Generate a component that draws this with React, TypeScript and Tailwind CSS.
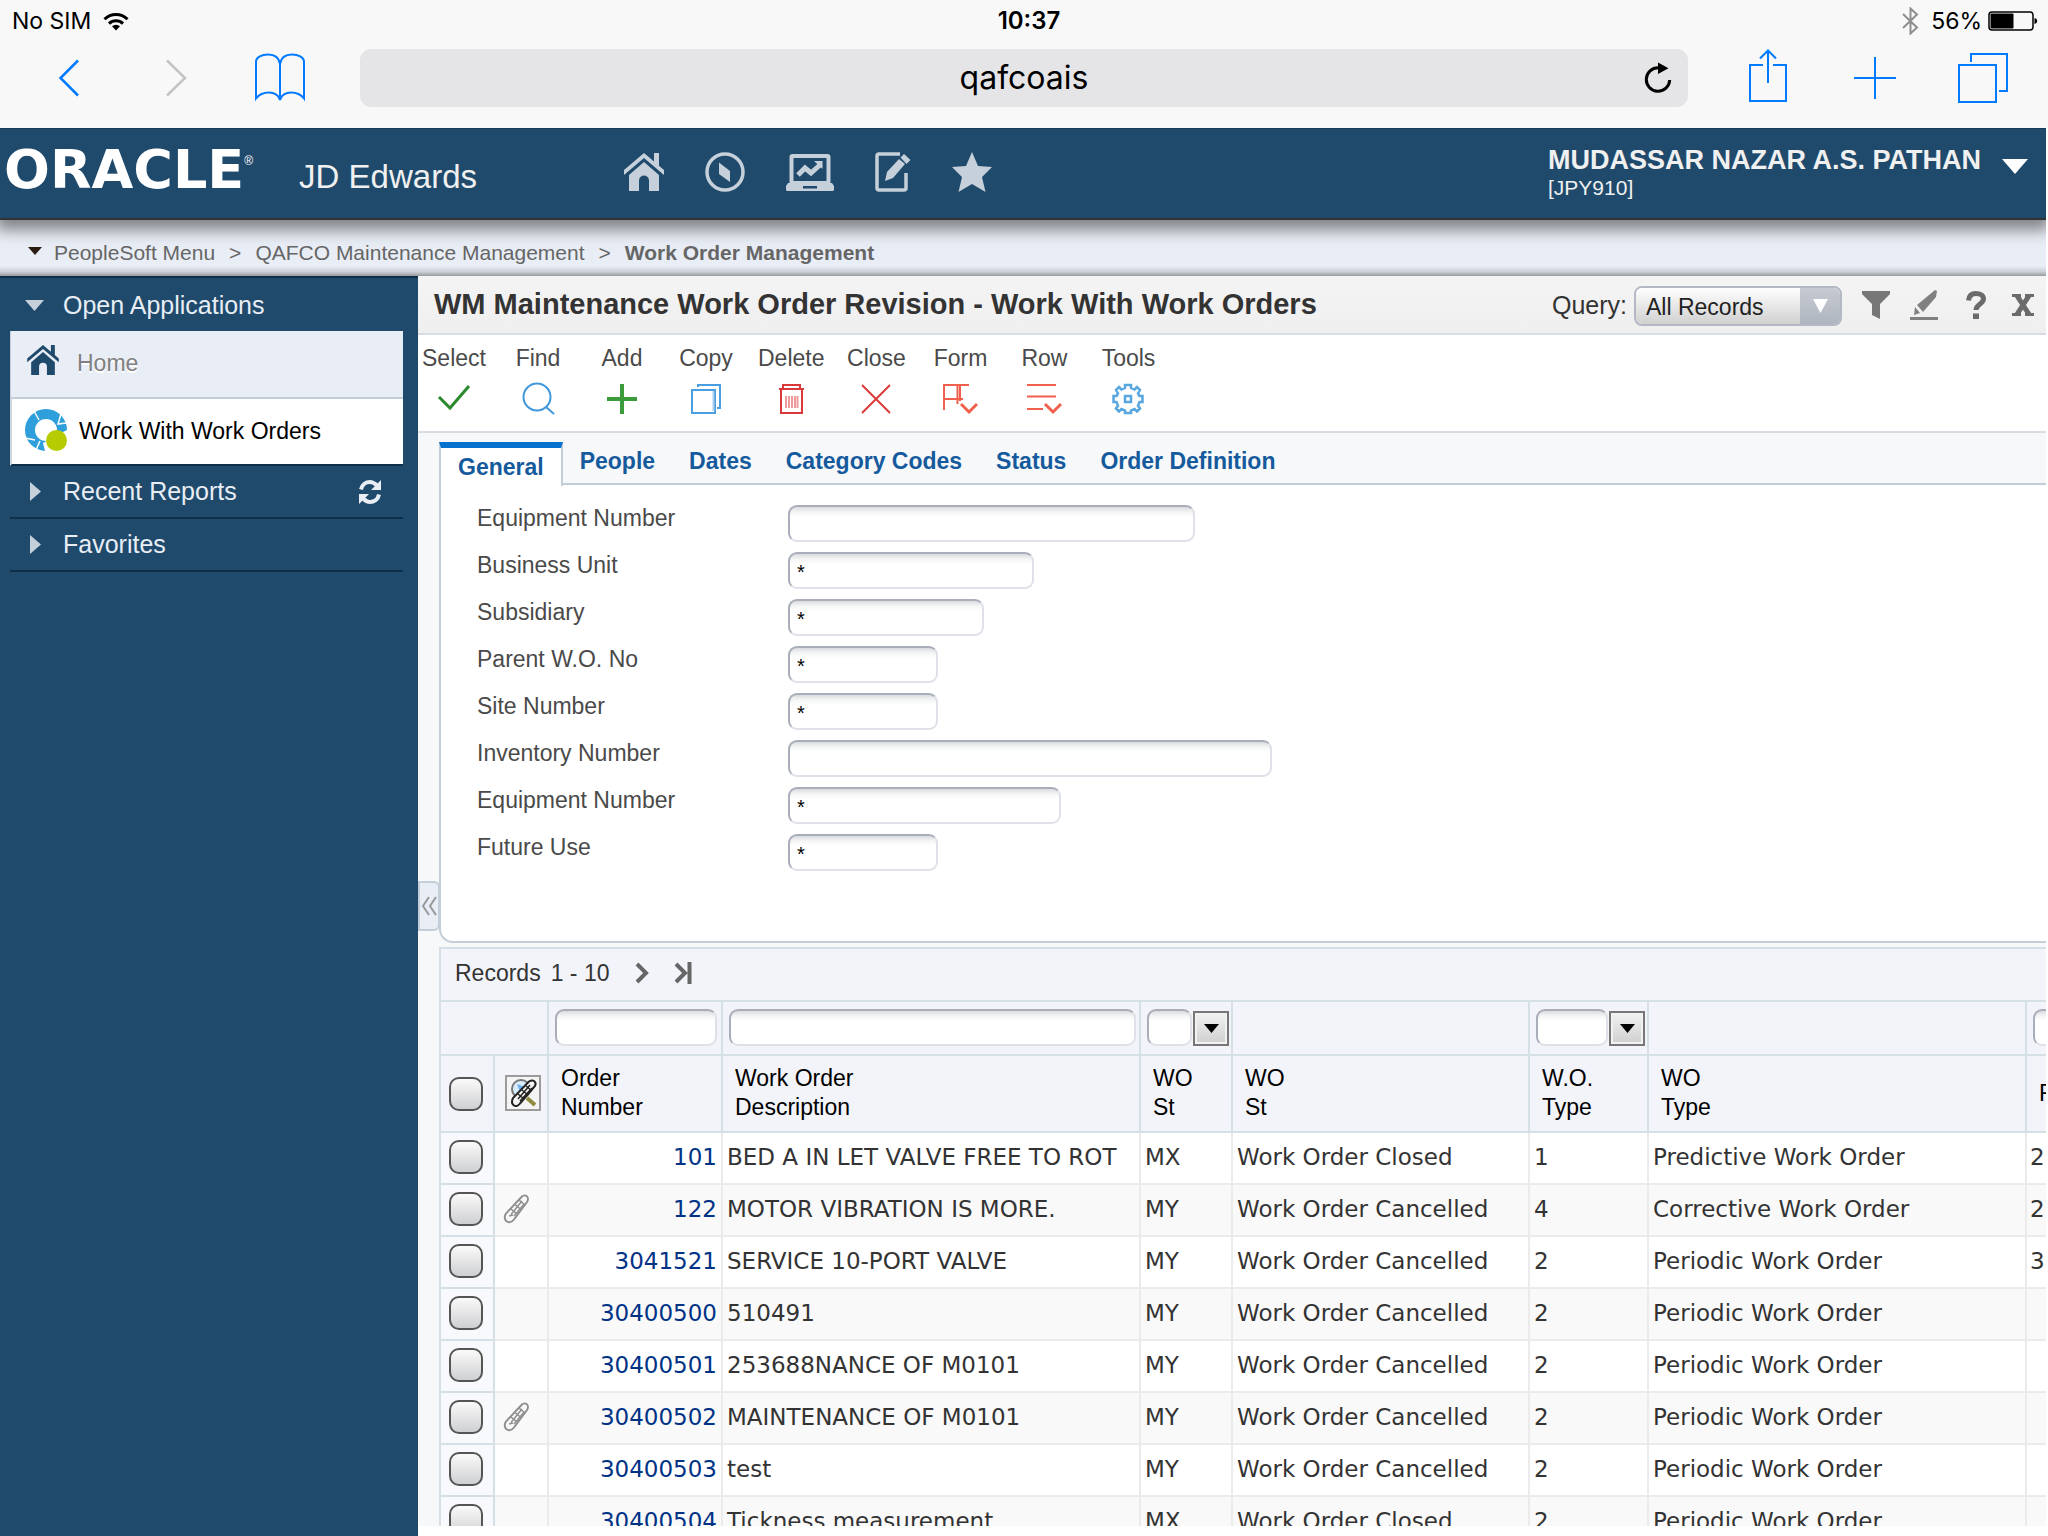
import React from "react";

type IconProps = { className?: string };

const fieldBox =
  "h-[37px] rounded-[9px] border-2 border-t-[#a9aeba] border-l-[#a9aeba] border-r-[#dfe1e8] border-b-[#dfe1e8] bg-white bg-[linear-gradient(to_bottom,#d9dcdf_0px,#f4f5f5_5px,#ffffff_10px)] text-black outline-none";

/* ---------- browser icons ---------- */

const Wifi = () => (
  <svg width="26" height="19" viewBox="0 0 26 19" fill="none" stroke="#000" strokeWidth="3">
    <path d="M1.5 7.2a16.3 16.3 0 0 1 23 0" />
    <path d="M6 11.6a10 10 0 0 1 14 0" />
    <path d="M13 18.5l-4-4.2a6 6 0 0 1 8 0z" fill="#000" stroke="none" />
  </svg>
);
const Bluetooth = () => (
  <svg width="17" height="28" viewBox="0 0 17 28" fill="none" stroke="#8e8e8e" strokeWidth="2">
    <path d="M1 7l14 13.500-6.500 6V1.500L15 7.500 1 21" />
  </svg>
);
const Battery = () => (
  <svg width="50" height="20" viewBox="0 0 50 20">
    <rect x="1" y="1" width="44" height="18" rx="3" fill="none" stroke="#000" strokeWidth="1.500" />
    <rect x="2.500" y="2.500" width="23" height="15" rx="1" fill="#000" />
    <path d="M46.500 7c3.500 .5 3.500 5.500 0 6z" fill="#000" />
  </svg>
);
const Chevron = ({ flip }: { flip?: boolean }) => (
  <svg width="22" height="38" viewBox="0 0 22 38" fill="none" stroke={flip ? "#c4c4c4" : "#007aff"} strokeWidth="2.500">
    {flip ? <path d="M2 1.500L20 19 2 36.500" /> : <path d="M20 1.500L2.500 19 20 36.500" />}
  </svg>
);
const Book = () => (
  <svg width="52" height="50" viewBox="0 0 52 50" fill="none" stroke="#007aff" strokeWidth="2">
    <path d="M26 11C25 4 20 1.500 14 1.500S2 4 2 8.500v37c3-4 8-6 13-6s10 2.500 11 7.500c1-5 6-7.500 11-7.500s10 2 13 6v-37c0-4.500-6-7-12-7S27 4 26 11zV47" />
  </svg>
);
const Reload = () => (
  <svg width="28" height="32" viewBox="0 0 28 32">
    <path d="M14.500 5.800A11.700 11.700 0 1 0 25.700 18" fill="none" stroke="#000" strokeWidth="3" />
    <path d="M14 .5l10.500 5.800L14 12z" fill="#000" />
  </svg>
);
const Share = () => (
  <svg width="40" height="54" viewBox="0 0 40 54" fill="none" stroke="#007aff" strokeWidth="2">
    <path d="M15 16H2v36h36V16H25M20 34V2M12 9.500L20 1.500l8 8" />
  </svg>
);
const Plus = () => (
  <svg width="42" height="42" viewBox="0 0 42 42" stroke="#007aff" strokeWidth="2">
    <path d="M0 21h42M21 0v42" />
  </svg>
);
const Pages = () => (
  <svg width="50" height="50" viewBox="0 0 50 50" fill="none" stroke="#007aff" strokeWidth="2">
    <path d="M1 12h37v37H1zM13 9V1h36v37h-8" />
  </svg>
);

/* ---------- application header icons ---------- */

const House = ({ className }: IconProps) => (
  <svg className={className} viewBox="0 0 40 38" fill="currentColor">
    <path d="M20 0L0 17v5L20 5l20 17v-5l-5-4.300V0h-5v8.500z" />
    <path d="M20 9L5 22v16h10V27.500a5 5 0 0 1 10 0V38h10V22z" />
  </svg>
);
const Compass = () => (
  <svg width="40" height="40" viewBox="0 0 40 40">
    <circle cx="20" cy="20" r="18" fill="none" stroke="currentColor" strokeWidth="3.500" />
    <path d="M14 10.500L25 19v11L14 22z" fill="currentColor" />
  </svg>
);
const Laptop = () => (
  <svg width="48" height="37" viewBox="0 0 48 37">
    <rect x="5.500" y="2" width="37" height="27" rx="1" fill="none" stroke="currentColor" strokeWidth="4" />
    <path d="M12 21l7-7 6 5 10-9" fill="none" stroke="currentColor" strokeWidth="5" />
    <path d="M28 7h8.500v8z" fill="currentColor" />
    <path fillRule="evenodd" d="M2 29h44l2 3v4q0 1-2 1H2q-2 0-2-1v-4zM17 32v2.500h14V32z" fill="currentColor" />
  </svg>
);
const Note = () => (
  <svg width="36" height="40" viewBox="0 0 36 40">
    <path d="M25 2H4Q2 2 2 4v32q0 2 2 2h25q2 0 2-2V21" fill="none" stroke="currentColor" strokeWidth="3.500" />
    <path d="M10 29l2-9L24 7l6 5-12 14zM25.500 5.500L29 2l6.500 6-4 4z" fill="currentColor" />
  </svg>
);
const Star = () => (
  <svg width="40" height="40" viewBox="0 0 40 40" fill="currentColor">
    <path d="M20 0l6 14 14 1-10 10 3.500 15L20 32 6.500 40 10 25 0 15l14-1z" />
  </svg>
);

/* ---------- sidebar icons ---------- */

const Refresh = () => (
  <svg width="22" height="24" viewBox="0 0 22 24">
    <g fill="none" stroke="#e9eef5" strokeWidth="4">
      <path d="M2 9.500C3 4.500 7 2 11 2c3.500 0 5 1.500 7.500 4" />
      <path d="M20 14.500C19 19.500 15 22 11 22c-3.500 0-5-1.500-7.500-4" />
    </g>
    <path d="M22 0v10H12zM0 24V14h10z" fill="#e9eef5" />
  </svg>
);
const AppLogo = () => (
  <svg width="42" height="42" viewBox="0 0 42 42">
    <circle cx="21" cy="21" r="16" fill="none" stroke="#2f9fdc" strokeWidth="10" />
    <path d="M9 2l5 9M36 5l-3 10 8-1M0 29l10 2M11 41l4-9" stroke="#fff" strokeWidth="1.500" fill="none" />
    <path d="M34 25l8-4v21H20l-2-8z" fill="#fff" />
    <circle cx="31.500" cy="31.500" r="10.500" fill="#b6cc00" />
  </svg>
);

/* ---------- toolbar icons ---------- */

const toolIcon = { width: 36, height: 34, viewBox: "0 0 36 34", fill: "none" } as const;

const tools: { label: string; icon: React.ReactNode }[] = [
  { label: "Select", icon: <svg {...toolIcon} stroke="#2b8a2b" strokeWidth="3"><path d="M3 15l11 11L33 4" /></svg> },
  { label: "Find", icon: <svg {...toolIcon} stroke="#3f97dc" strokeWidth="2"><circle cx="17" cy="15" r="13.500" /><path d="M26 25l8 7" /></svg> },
  { label: "Add", icon: <svg {...toolIcon} stroke="#3c9c3c" strokeWidth="4"><path d="M3 17h30M18 2v30" /></svg> },
  {
    label: "Copy",
    icon: (
      <svg {...toolIcon} stroke="#4b9edf" strokeWidth="2">
        <path d="M4 8h23v23H4z" />
        <path d="M10 5V3h22v23h-3" />
        <path d="M25.500 29V9" stroke="#a9d0f0" />
      </svg>
    ),
  },
  {
    label: "Delete",
    icon: (
      <svg {...toolIcon} stroke="#d9393b" strokeWidth="2">
        <path d="M6 7h25M10 6V3h17v3M8 7v24h21V7" />
        <path d="M13 14v12M16 14v12M19 14v12M22 14v12M24.500 14v12" stroke="#ee9a9b" strokeWidth="2" />
      </svg>
    ),
  },
  { label: "Close", icon: <svg {...toolIcon} stroke="#dc3a37" strokeWidth="2"><path d="M4 3l28 28M32 3L4 31" /></svg> },
  {
    label: "Form",
    icon: (
      <svg {...toolIcon} stroke="#f0604c" strokeWidth="2">
        <path d="M2 28V3h25M2 17h19M15.500 3v19M18 3v16" />
        <path d="M19 22l8 8 8-8" strokeWidth="3" />
      </svg>
    ),
  },
  {
    label: "Row",
    icon: (
      <svg {...toolIcon} stroke="#f0604c" strokeWidth="2">
        <path d="M1 3h29M1 14.500h29M1 27h16" />
        <path d="M19 22l8 8 8-8" strokeWidth="3" />
      </svg>
    ),
  },
  {
    label: "Tools",
    icon: (
      <svg {...toolIcon} stroke="#58a6df" strokeWidth="2.500">
        <path d="M15 6V3h6v3l3.500 1.500L27 5l3 3-2 3.500L29.500 14h3v6h-3L28 23.500l2 3-3 3-2.500-2.500L21 28.500V31h-6v-2.500L11.500 27 9 29.500l-3-3 2-3L6.500 20h-3v-6h3L8 11.500 6 8l3-3 2.500 2.500z" />
        <path d="M15 14h6v6h-6z" />
      </svg>
    ),
  },
];

/* ---------- grid icons ---------- */

const Clip = () => (
  <svg width="26" height="30" viewBox="0 0 26 30" fill="none" stroke="#8f8f8f" strokeWidth="2">
    <path d="M18 3.500L3 19.500c-2 3-1.500 6.500 1 8s5 .5 7-2L24 8c1.500-2.500 1-5-.5-6s-4-.5-5.500 1.500z" />
    <path d="M19 7L8 20.500M21.500 9.500L11 22M16 6l6 5M12 10.500l6 5M8 15l6 5M6 22l4-1" strokeWidth="1.500" />
  </svg>
);
const ClipSearch = () => (
  <svg width="36" height="36" viewBox="0 0 36 36" fill="none">
    <rect x="1" y="1" width="34" height="34" fill="#f4f4f4" stroke="#9b9b9b" strokeWidth="2" />
    <path d="M22 23l8 7" stroke="#8f8a3c" strokeWidth="4" />
    <circle cx="16" cy="14" r="9" fill="#d9ecfb" stroke="#777" strokeWidth="2" />
    <path d="M12 9l8 3-5 5z" fill="#6db1ee" />
    <g stroke="#222" strokeWidth="2">
      <path d="M24 6.500L8 23c-1.500 3-1 6 1 7.500s4.500 0 6-2L30 11c1-2 .5-4-1-5s-3.500-.5-5 .5z" fill="#f4f4f4" />
      <path d="M25 10L13 24M27 13L15 26M21 11l6 5M17 15l6 5M13 19l6 5" strokeWidth="1.500" />
    </g>
  </svg>
);

/* ---------- data ---------- */

const fields = [
  { label: "Equipment Number", value: "", width: "w-[407px]" },
  { label: "Business Unit", value: "*", width: "w-[246px]" },
  { label: "Subsidiary", value: "*", width: "w-[196px]" },
  { label: "Parent W.O. No", value: "*", width: "w-[150px]" },
  { label: "Site Number", value: "*", width: "w-[150px]" },
  { label: "Inventory Number", value: "", width: "w-[484px]" },
  { label: "Equipment Number", value: "*", width: "w-[273px]" },
  { label: "Future Use", value: "*", width: "w-[150px]" },
];

const rows = [
  { id: "101", clip: false, desc: "BED A IN LET VALVE FREE TO ROT", st: "MX", status: "Work Order Closed", type: "1", typeName: "Predictive Work Order", more: "2" },
  { id: "122", clip: true, desc: "MOTOR VIBRATION IS MORE.", st: "MY", status: "Work Order Cancelled", type: "4", typeName: "Corrective Work Order", more: "2" },
  { id: "3041521", clip: false, desc: "SERVICE 10-PORT VALVE", st: "MY", status: "Work Order Cancelled", type: "2", typeName: "Periodic Work Order", more: "3" },
  { id: "30400500", clip: false, desc: "510491", st: "MY", status: "Work Order Cancelled", type: "2", typeName: "Periodic Work Order", more: "" },
  { id: "30400501", clip: false, desc: "253688NANCE OF M0101", st: "MY", status: "Work Order Cancelled", type: "2", typeName: "Periodic Work Order", more: "" },
  { id: "30400502", clip: true, desc: "MAINTENANCE OF M0101", st: "MY", status: "Work Order Cancelled", type: "2", typeName: "Periodic Work Order", more: "" },
  { id: "30400503", clip: false, desc: "test", st: "MY", status: "Work Order Cancelled", type: "2", typeName: "Periodic Work Order", more: "" },
  { id: "30400504", clip: false, desc: "Tickness measurement", st: "MX", status: "Work Order Closed", type: "2", typeName: "Periodic Work Order", more: "" },
];

/* ---------- parts ---------- */

function BrowserBar() {
  return (
    <div className="flex h-32 shrink-0 flex-col bg-[#f8f8f8] font-[Inter,sans-serif] text-black">
      <div className="grid h-10 grid-cols-[1fr_auto_1fr] items-center pl-3 pr-2.5 pt-0.5 text-[23px]">
        <div className="flex items-center gap-3">
          <span>No SIM</span>
          <Wifi />
        </div>
        <div className="pl-2 text-center text-2xl font-semibold">10:37</div>
        <div className="flex items-center justify-end">
          <Bluetooth />
          <span className="ml-3 mr-1.5">56%</span>
          <Battery />
        </div>
      </div>
      <div className="grid h-[76px] grid-cols-[360px_1fr_360px] items-center">
        <div className="flex items-center pl-[58px]">
          <button aria-label="Back" className="mr-[85px]"><Chevron /></button>
          <button aria-label="Forward" className="mr-[67px]"><Chevron flip /></button>
          <button aria-label="Bookmarks"><Book /></button>
        </div>
        <div className="flex h-[58px] items-center rounded-[11px] bg-[#e5e5e7] pl-[60px] pr-4">
          <input aria-label="Address" defaultValue="qafcoais" className="min-w-0 flex-1 bg-transparent text-center text-[32px] outline-none" />
          <button aria-label="Reload" className="ml-4"><Reload /></button>
        </div>
        <div className="flex items-center pl-[60px]">
          <button aria-label="Share" className="mb-1 mr-[66px]"><Share /></button>
          <button aria-label="New tab" className="mr-[62px]"><Plus /></button>
          <button aria-label="Tabs"><Pages /></button>
        </div>
      </div>
    </div>
  );
}

function Header() {
  return (
    <header className="z-10 flex h-[92px] shrink-0 border-b-2 border-t border-b-[#333] border-t-[#173a56] bg-[#1f4a6c] shadow-[0_6px_14px_4px_rgba(60,60,60,0.6)]">
      <div className="flex w-[624px] items-baseline pl-1 pt-2.5 text-white">
        <span className="font-['DejaVu_Sans',sans-serif] text-[54px] font-bold leading-[62px]">ORACLE</span>
        <sup className="self-start pt-5 text-xs">®</sup>
        <span className="ml-auto mr-[147px] text-[33px] text-[#f0f0f0]">JD Edwards</span>
      </div>
      <nav className="flex h-[86px] items-center gap-[41px] text-[#c5d0da]">
        <button aria-label="Home"><House className="h-[38px] w-10" /></button>
        <button aria-label="Navigator"><Compass /></button>
        <button aria-label="Dashboard"><Laptop /></button>
        <button aria-label="Edit"><Note /></button>
        <button aria-label="Favorites"><Star /></button>
      </nav>
      <button className="ml-auto mr-[18px] flex items-start gap-[21px] pt-4 text-left text-[#f0f0f0]">
        <span>
          <span className="block text-[27px] font-bold leading-[31px]">MUDASSAR NAZAR A.S. PATHAN</span>
          <span className="block text-[21px] leading-6">[JPY910]</span>
        </span>
        <svg width="26" height="15" viewBox="0 0 26 15" className="mt-[14px]"><path d="M0 0h26L13 15z" fill="#fff" /></svg>
      </button>
    </header>
  );
}

function Breadcrumbs() {
  return (
    <nav className="flex h-14 shrink-0 items-center gap-[14px] bg-[linear-gradient(to_bottom,#e9eef6_46px,#c9cdd4_52px,#96999d_56px)] pl-7 pt-2.5 text-[21px] leading-6 text-[#666]">
      <span className="flex items-center gap-3">
        <svg width="14" height="8" viewBox="0 0 14 8" className="-mt-1"><path d="M0 0h14L7 8z" fill="#2b1d12" /></svg>
        <a href="#menu">PeopleSoft Menu</a>
      </span>
      <span>&gt;</span>
      <a href="#maintenance">QAFCO Maintenance Management</a>
      <span>&gt;</span>
      <a href="#orders" className="font-bold">Work Order Management</a>
    </nav>
  );
}

const RightTriangle = () => (
  <svg width="11" height="19" viewBox="0 0 11 19" className="ml-5 mr-[22px]"><path d="M0 0l11 9.500L0 19z" fill="#c5d0da" /></svg>
);

function Sidebar() {
  return (
    <aside className="w-[418px] shrink-0 border-t-2 border-[#0f2f49] bg-[#1f4a6c] pl-2.5 pr-[15px] text-[25px] text-[#e9eef5]">
      <button className="flex h-[53px] w-full items-center gap-[19px] pl-[15px] pt-0.5">
        <svg width="19" height="11" viewBox="0 0 19 11"><path d="M0 0h19L9.500 11z" fill="#c5d0da" /></svg>
        Open Applications
      </button>
      <div className="text-[23px]">
        <a href="#home" className="flex h-[68px] items-center gap-[18px] border-b-2 border-l border-b-[#c3ced9] border-l-[#c3ced9] bg-[#e9eef6] pb-0.5 pl-4 text-[#808080] [text-shadow:0_2px_0_#fff]">
          <House className="-mt-1.5 h-[30px] w-8 text-[#1f4a6c]" />
          Home
        </a>
        <a href="#work" className="flex h-[67px] items-center gap-3 border-l-2 border-b-2 border-b-[#0f2f49] border-l-[#d0d7de] bg-white pl-[13px] text-black">
          <span className="-mt-1"><AppLogo /></span>
          Work With Work Orders
        </a>
      </div>
      <div className="flex h-[53px] items-center border-b-2 border-[#0f2f49]">
        <button className="flex flex-1 items-center"><RightTriangle />Recent Reports</button>
        <button aria-label="Refresh" className="mr-[22px]"><Refresh /></button>
      </div>
      <button className="flex h-[53px] w-full items-center border-b-2 border-[#0f2f49]"><RightTriangle />Favorites</button>
    </aside>
  );
}

function TitleBar() {
  return (
    <div className="flex h-[59px] shrink-0 items-center border-b-2 border-[#d7dde2] bg-linear-to-b from-[#f4f4f4] to-[#efefef] pl-4 pr-3 text-[#333]">
      <h1 className="text-[29px] font-bold">WM Maintenance Work Order Revision - Work With Work Orders</h1>
      <label htmlFor="query" className="ml-auto pt-0.5 text-[25px]">Query:</label>
      <div className="relative ml-[7px] mt-0.5 h-10 w-52 overflow-hidden rounded-[8px] border-2 border-[#b3b8c4]">
        <select id="query" className="h-full w-full appearance-none bg-linear-to-b from-white to-[#d0d0d0] pl-2.5 pt-0.5 text-[23px] text-[#222] outline-none">
          <option>All Records</option>
        </select>
        <span className="pointer-events-none absolute inset-y-0 right-0 flex w-10 items-center justify-center bg-linear-to-b from-[#c6cad2] to-[#afb5c0]">
          <svg width="15" height="14" viewBox="0 0 15 14"><path d="M0 0h15L7.500 14z" fill="#fff" /></svg>
        </span>
      </div>
      <button aria-label="Filter" className="ml-5">
        <svg width="28" height="30" viewBox="0 0 28 30" fill="#777"><path d="M0 1h28v3L18 14v15l-8-4V14L0 4z" /></svg>
      </button>
      <button aria-label="Edit query" className="ml-5">
        <svg width="28" height="32" viewBox="0 0 28 32" fill="#808080"><path d="M0 28h28v3H0zM4 26l1-8 5 6zM7 16L25 1l2 1-1 6-13 15z" /></svg>
      </button>
      <button aria-label="Help" className="ml-7">
        <svg width="20" height="28" viewBox="0 0 20 28"><path d="M2.500 9.500C3 4.500 6 2.500 10 2.500s7.500 2 7.500 5.500c0 5-7.500 5-7.500 11" fill="none" stroke="#6b6b6b" strokeWidth="5" /><path d="M7 22.500h6V28H7z" fill="#6b6b6b" /></svg>
      </button>
      <button aria-label="Close form" className="ml-[26px]">
        <svg width="22" height="22" viewBox="0 0 22 22"><path d="M4.500 1l13 20M17.500 1l-13 20" stroke="#6b6b6b" strokeWidth="5" /><path d="M0 0h9v3H0zM13 0h9v3h-9zM0 19h9v3H0zM13 19h9v3h-9z" fill="#6b6b6b" /></svg>
      </button>
    </div>
  );
}

function Toolbar() {
  return (
    <div className="flex h-[98px] shrink-0 items-start gap-5 border-b-2 border-[#d7dde2] bg-white pl-1 pt-[9px] text-[23px] leading-7 text-[#4a4a4a]">
      {tools.map((t) => (
        <button key={t.label} className="flex min-w-16 flex-col items-center gap-2.5">
          <span>{t.label}</span>
          {t.icon}
        </button>
      ))}
    </div>
  );
}

function FormPanel() {
  return (
    <div className="relative shrink-0 pl-[21px]">
      <div role="tablist" className="flex h-[52px] items-end text-[23px] font-bold text-[#155a9c]">
        <button role="tab" aria-selected="true" className="z-10 -mb-px h-[44px] border-x-2 border-t-[6px] border-x-[#c3ced9] border-t-[#0572ce] bg-white px-[17px] leading-[34px]">
          General
        </button>
        <div className="flex h-full flex-1 items-center gap-[34px] border-b-2 border-[#c3ced9] pl-[17px] pt-[7px]">
          {["People", "Dates", "Category Codes", "Status", "Order Definition"].map((t) => (
            <button key={t} role="tab" aria-selected="false">{t}</button>
          ))}
        </div>
      </div>
      <div className="h-[458px] rounded-bl-[14px] border-b-2 border-l-2 border-[#c3ced9] bg-white pl-9 pt-5">
        {fields.map((f, i) => (
          <div key={i} className="flex h-[47px] items-start">
            <label htmlFor={`field-${i}`} className="w-[311px] text-[23px] leading-[26px] text-[#4a4a4a]">{f.label}</label>
            <input id={`field-${i}`} defaultValue={f.value} className={`${fieldBox} ${f.width} px-[7px] pt-1 text-xl`} />
          </div>
        ))}
      </div>
      <button aria-label="Collapse sidebar" className="absolute bottom-3 left-0 flex h-[50px] w-[22px] items-center justify-center rounded-r-[6px] border-2 border-[#c3ced9] bg-[#e9eef6]">
        <svg width="16" height="20" viewBox="0 0 16 20" fill="none" stroke="#999" strokeWidth="2"><path d="M8 1L2 10l6 9M15 1L9 10l6 9" /></svg>
      </button>
    </div>
  );
}

const Check = ({ label }: { label: string }) => (
  <input
    type="checkbox"
    aria-label={label}
    className="ml-2 block h-[34px] w-[34px] appearance-none rounded-[10px] border-2 border-[#555] bg-linear-to-b from-[#fafafa] to-[#cfd0d2]"
  />
);

const PickButton = ({ label }: { label: string }) => (
  <button aria-label={label} className="ml-px mt-0.5 flex h-[35px] w-9 shrink-0 items-center justify-center border-2 border-[#777] bg-linear-to-b from-[#f2f2f2] to-[#cfcfcf] shadow-[inset_0_0_0_2px_#f2f2f2]">
    <svg width="15" height="9" viewBox="0 0 15 9"><path d="M0 0h15L7.500 9z" fill="#000" /></svg>
  </button>
);

function Grid() {
  const filterCell = "border-b-2 border-r-2 border-[#d5dfe6] p-0 pb-0.5 pl-1.5";
  const headCell = "border-b-2 border-r-2 border-[#d5dfe6] p-0 pb-0.5 pl-3 font-normal";
  const cell = "overflow-hidden whitespace-nowrap border-b-2 border-r-2 border-[#ebebeb] p-0 pb-0.5 pl-1";
  return (
    <div className="ml-[21px] mt-1 min-h-0 flex-1 overflow-hidden border-l-2 border-t-2 border-[#d5dfe6] bg-[#f2f4f9]">
      <div className="flex h-[53px] items-center border-b-2 border-[#d5dfe6] pb-0.5 pl-[14px] text-[23px] text-[#333]">
        <span className="mr-2.5">Records</span>
        <span>1 - 10</span>
        <button aria-label="Next page" className="ml-[26px]">
          <svg width="14" height="24" viewBox="0 0 14 24" fill="none" stroke="#666" strokeWidth="4"><path d="M2 2l9 9-9 9" /></svg>
        </button>
        <button aria-label="Last page" className="ml-[25px]">
          <svg width="18" height="24" viewBox="0 0 18 24" fill="none" stroke="#666" strokeWidth="4"><path d="M2 2l9 9-9 9M15.500 0v22" /></svg>
        </button>
      </div>
      <table className="w-full table-fixed border-separate border-spacing-0">
        <colgroup>
          <col className="w-[54px]" />
          <col className="w-[54px]" />
          <col className="w-[174px]" />
          <col className="w-[418px]" />
          <col className="w-[92px]" />
          <col className="w-[297px]" />
          <col className="w-[119px]" />
          <col className="w-[378px]" />
          <col />
        </colgroup>
        <thead>
          <tr className="h-[54px]">
            <td colSpan={2} className={filterCell} />
            <td className={filterCell}><input aria-label="Filter order number" className={`${fieldBox} block w-[162px]`} /></td>
            <td className={filterCell}><input aria-label="Filter description" className={`${fieldBox} block w-[407px]`} /></td>
            <td className={filterCell}>
              <div className="flex"><input aria-label="Filter status" className={`${fieldBox} w-[45px]`} /><PickButton label="Pick status" /></div>
            </td>
            <td className={filterCell} />
            <td className={filterCell}>
              <div className="flex"><input aria-label="Filter type" className={`${fieldBox} w-[72px]`} /><PickButton label="Pick type" /></div>
            </td>
            <td className={filterCell} />
            <td className="overflow-hidden border-b-2 border-[#d5dfe6] p-0 pb-0.5 pl-1.5">
              <div className="overflow-hidden"><input aria-label="Filter" className={`${fieldBox} block w-[162px]`} /></div>
            </td>
          </tr>
          <tr className="h-[77px] text-left text-[23px] leading-[29px] text-black">
            <th className="border-b-2 border-r-2 border-[#d5dfe6] p-0"><Check label="Select all" /></th>
            <th className="border-b-2 border-r-2 border-[#d5dfe6] p-0 pb-0.5 pl-2.5"><button aria-label="Attachments" className="block"><ClipSearch /></button></th>
            <th className={headCell}>Order<br />Number</th>
            <th className={headCell}>Work Order<br />Description</th>
            <th className={headCell}>WO<br />St</th>
            <th className={headCell}>WO<br />St</th>
            <th className={headCell}>W.O.<br />Type</th>
            <th className={headCell}>WO<br />Type</th>
            <th className="overflow-hidden border-b-2 border-[#d5dfe6] p-0 pl-3 font-normal">F</th>
          </tr>
        </thead>
        <tbody className="font-['DejaVu_Sans',sans-serif] text-[23px] text-[#333]">
          {rows.map((r) => (
            <tr key={r.id} className="h-[52px] bg-white even:bg-[#f9f9f9]">
              <td className="border-b-2 border-r-2 border-[#d5dfe6] bg-[#f7f9fd] p-0 pb-0.5"><Check label={`Select ${r.id}`} /></td>
              <td className="border-b-2 border-r-2 border-[#ebebeb] p-0 pb-0.5 pl-2">{r.clip && <Clip />}</td>
              <td className="border-b-2 border-r-2 border-[#ebebeb] p-0 pb-0.5 pr-1 text-right"><a href={`#${r.id}`} className="text-[#003286]">{r.id}</a></td>
              <td className={cell}>{r.desc}</td>
              <td className={cell}>{r.st}</td>
              <td className={cell}>{r.status}</td>
              <td className={cell}>{r.type}</td>
              <td className={cell}>{r.typeName}</td>
              <td className="overflow-hidden border-b-2 border-[#ebebeb] p-0 pb-0.5 pl-[3px]">{r.more}</td>
            </tr>
          ))}
        </tbody>
      </table>
    </div>
  );
}

export default function App() {
  return (
    <div className="flex h-screen flex-col overflow-hidden bg-white font-['Liberation_Sans',Arial,sans-serif]">
      <BrowserBar />
      <div className="mr-0.5 flex min-h-0 flex-1 flex-col overflow-hidden">
        <Header />
        <Breadcrumbs />
        <div className="flex min-h-0 flex-1">
          <Sidebar />
          <main className="mb-2.5 flex min-w-0 flex-1 flex-col bg-[#f7f8fa]">
            <TitleBar />
            <Toolbar />
            <FormPanel />
            <Grid />
          </main>
        </div>
      </div>
    </div>
  );
}
